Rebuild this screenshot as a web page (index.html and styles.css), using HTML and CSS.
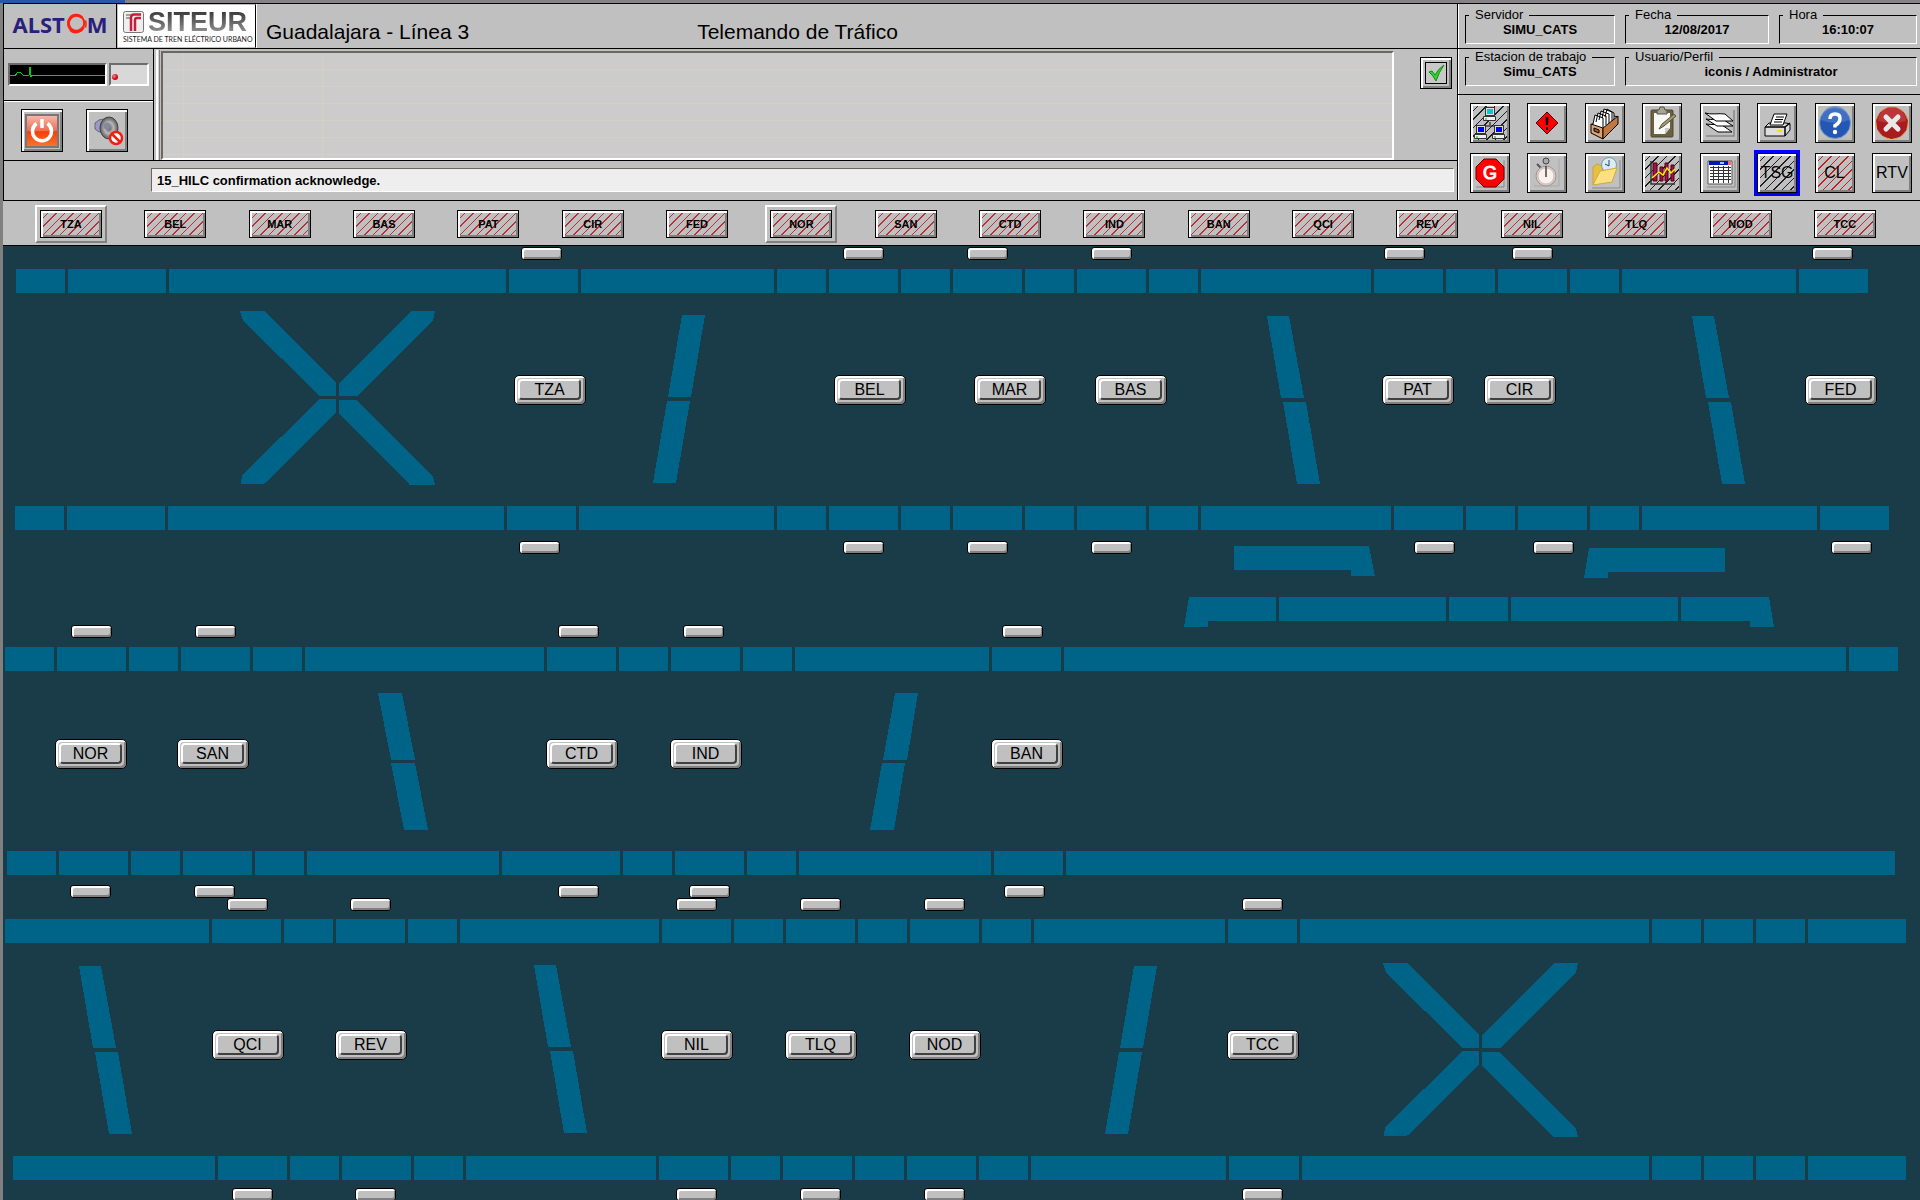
FILE: index.html
```html
<!DOCTYPE html>
<html lang="es">
<head>
<meta charset="utf-8">
<title>Telemando de Tráfico</title>
<link rel="stylesheet" href="styles.css">
</head>
<body>
<div class="topstrip"><div class="topstrip-tab"></div></div>
<div class="app">
  <header class="header">
    <div class="main">
      <div class="brand">
        <div class="alstom">ALST<svg width="22" height="22" viewBox="0 0 22 22" fill="none" stroke="#ff2010"><path stroke-width="3" d="M17 4.500A8 8 0 1 0 18.500 14"/><path stroke-width="2" d="M6 3.500C12-.5 20 4 19 11.500S10 22 5 17"/><path stroke-width="1.500" d="M20.500 7.500q1 3.500 0 7"/></svg>M</div>
        <div class="siteur">
          <div class="siteur-top">
            <svg width="21" height="22" viewBox="0 0 21 22"><rect x=".5" y=".5" width="20" height="21" rx="2" fill="#eee" stroke="#777"/><path d="M3 4h6M3 7h4" stroke="#888" stroke-width="1.500"/><path d="M18 3.500h-7q-3 0-3 3V20M18 7h-4q-2 0-2 2v11" fill="none" stroke="#c2203c" stroke-width="2.500"/></svg>
            <span>SITEUR</span>
          </div>
          <div class="siteur-sub">SISTEMA DE TREN ELÉCTRICO URBANO</div>
        </div>
        <h1 class="titles"><span>Guadalajara - Línea 3</span><span>Telemando de Tráfico</span></h1>
      </div>
      <div class="middle">
        <div class="side">
          <div class="pulse">
            <div class="ecg"><svg width="96" height="19" viewBox="0 0 96 19"><path d="M0 10h3l2 1 3-4 3 1 2 2h6l1-8 1 10 1-2h75" fill="none" stroke="#0c2" shape-rendering="crispEdges"/></svg></div>
            <div class="lamp"><span></span></div>
          </div>
          <div class="side-buttons">
            <button class="sq sq-side" aria-label="Salir"><svg width="34" height="34" viewBox="0 0 34 34"><defs><linearGradient id="pw" x1="0" y1="0" x2="0" y2="1"><stop offset="0" stop-color="#f4bdb0"/><stop offset=".5" stop-color="#ee6a50"/><stop offset=".52" stop-color="#f83c08"/><stop offset="1" stop-color="#f87830"/></linearGradient></defs><rect x="1" y="1" width="32" height="32" fill="url(#pw)" stroke="#777" stroke-width="2"/><path d="M11.500 9.500a9.500 9.500 0 1 0 11 0" fill="none" stroke="#fff" stroke-width="3.500"/><path d="M17 5v9" stroke="#fff" stroke-width="3.500"/></svg></button>
            <button class="sq sq-side" aria-label="Silenciar"><svg width="34" height="34" viewBox="0 0 34 34"><defs><radialGradient id="spk"><stop offset="0" stop-color="#556"/><stop offset=".5" stop-color="#b8b8b8"/><stop offset="1" stop-color="#5a5a5a"/></radialGradient></defs><path d="M5 9l4-3 5-1v12l-5 1-4-3z" fill="#9a9ac8" stroke="#667"/><ellipse cx="19" cy="14" rx="9" ry="11" fill="url(#spk)" stroke="#444"/><circle cx="17" cy="12" r="3.500" fill="#889"/><circle cx="26" cy="24" r="6" fill="#fff" stroke="#f02010" stroke-width="2.500"/><path d="M22 20l8 8" stroke="#f02010" stroke-width="2.500"/></svg></button>
          </div>
        </div>
        <div class="handle"></div>
        <div class="alarms"></div>
        <button class="sq ack" aria-label="Reconocer"><svg width="22" height="22" viewBox="0 0 22 22"><rect x=".5" y=".5" width="21" height="21" fill="#c8c8c8" stroke="#000"/><path d="M4 10l3-1 3 4q3-6 9-10-5 7-8 16-3-6-7-9z" fill="#2bd52b" stroke="#168a16"/></svg></button>
      </div>
      <div class="message"><input type="text" aria-label="Mensaje" value="15_HILC confirmation acknowledge." readonly></div>
    </div>
    <div class="info">
      <div class="boxes boxes-3">
        <fieldset><legend>Servidor</legend><b>SIMU_CATS</b></fieldset>
        <fieldset><legend>Fecha</legend><b>12/08/2017</b></fieldset>
        <fieldset><legend>Hora</legend><b>16:10:07</b></fieldset>
      </div>
      <div class="boxes boxes-2">
        <fieldset><legend>Estacion de trabajo</legend><b>Simu_CATS</b></fieldset>
        <fieldset><legend>Usuario/Perfil</legend><b>iconis / Administrator</b></fieldset>
      </div>
      <div class="tools">
        <button class="sq hatch-black" aria-label="Red"><svg width="34" height="34" viewBox="0 0 34 34"><path d="M17 16v3M7 23v-3h20v3" fill="none" stroke="#000"/><g id="pc"><rect x="12.500" y="1.500" width="9" height="8" fill="#ddd" stroke="#333"/><path d="M10.500 10.500h12v4h-12z" fill="#eee" stroke="#333"/><path d="M12 13h2" stroke="#0a0"/></g><rect x="14" y="3" width="6" height="5" fill="#0cc"/><use href="#pc" x="-9" y="18"/><use href="#pc" x="9" y="18"/><path d="M5 21h6v5H5zM23 21h6v5h-6z" fill="#00f"/></svg></button>
        <button class="sq" aria-label="Alarmas"><svg width="34" height="34" viewBox="0 0 34 34"><path d="M17 6l11 11-11 11L6 17z" fill="#f00" stroke="#400"/><path d="M15.500 11h3l-.5 8h-2zM16 21h2v3h-2z" fill="#000"/></svg></button>
        <button class="sq" aria-label="Archivo"><svg width="34" height="34" viewBox="0 0 34 34" stroke="#000"><path d="M3 19L18 8l12 3-15 13z" fill="#fff"/><path d="M5 18l2-9 8 3v9M8 16l2-9 8 3v9M11 14l2-9 8 3v9M14 12l2-9 8 3v9M17 11l2-8 7 4v8" fill="#fff"/><path d="M3 18l12 4v11L3 27z" fill="#e0a070"/><path d="M15 22l15-12v8L15 33z" fill="#c07840"/><path d="M6 22l5 2v3l-5-2z" fill="#a06030"/></svg></button>
        <button class="sq" aria-label="Informe"><svg width="34" height="34" viewBox="0 0 34 34"><rect x="6" y="4" width="22" height="27" rx="1" fill="#6b6040" stroke="#504830"/><path d="M9 7h16v15l-5 6H9z" fill="#f8f8f4"/><path d="M12 4h2l1-3h4l1 3h2v4H12z" fill="#a8a490" stroke="#555"/><path d="M25 22h-5v6z" fill="#ccc"/><path d="M14 23l3-5L29 8l2 2-12 10z" fill="#a09878" stroke="#5a5238"/></svg></button>
        <button class="sq" aria-label="Capas"><svg width="34" height="34" viewBox="0 0 34 34"><path d="M31 4v26H3" fill="none" stroke="#888" stroke-width="1.500"/><g fill="#fff" stroke="#000"><path d="M3 18c6 1 10 0 16 1l10 7H15z"/><path d="M3 13c6 1 10 0 18 1l9 6H14z"/><path d="M2 7c6 2 14 0 20 1l8 7H13z"/></g></svg></button>
        <button class="sq" aria-label="Imprimir"><svg width="34" height="34" viewBox="0 0 34 34" stroke="#000"><path d="M9 17h17l4 1v6l-5 6H5v-9z" fill="#ddd"/><path d="M10 19l4-11h13l-4 11z" fill="#fff"/><path d="M16 11h8M15 13.500h8M14 16h8" fill="none"/><path d="M5 21h20v9M25 21l5-4" fill="none" stroke-width="1.500"/><path d="M17 24h5v2h-5z" fill="#fd0" stroke="none"/></svg></button>
        <button class="sq" aria-label="Ayuda"><svg width="34" height="34" viewBox="0 0 34 34"><rect x="1" y="1" width="32" height="32" fill="none" stroke="#bdbda0"/><circle cx="17" cy="17" r="15.500" fill="#2456b4" stroke="#7a9ad8"/><path d="M3 14a14 14 0 0 1 28 0q-14 6-28 0z" fill="#5580cc" opacity=".6"/><path d="M12 13q0-5 5-5t5 4.500-5 7v2" fill="none" stroke="#fff" stroke-width="3.500"/><circle cx="17" cy="26" r="2.200" fill="#fff"/></svg></button>
        <button class="sq" aria-label="Cerrar"><svg width="34" height="34" viewBox="0 0 34 34"><circle cx="17" cy="17" r="16" fill="#a81c20" stroke="#e8a030" stroke-dasharray="6 3"/><path d="M3 15a14 14 0 0 1 28 0q-14 4-28 0z" fill="#d86060" opacity=".4"/><path d="M11 11l12 12M23 11L11 23" stroke="#e8e8e8" stroke-width="5" stroke-linecap="round"/></svg></button>
        <button class="sq" aria-label="G"><svg width="34" height="34" viewBox="0 0 34 34"><path d="M31 4v27H3" fill="none" stroke="#888"/><path d="M11 3h12l8 8v12l-8 8H11l-8-8V11z" fill="#f00" stroke="#600"/><text x="17" y="23" text-anchor="middle" class="g-text">G</text></svg></button>
        <button class="sq" aria-label="Cronómetro"><svg width="34" height="34" viewBox="0 0 34 34"><path d="M29 3v27H4" fill="none" stroke="#aaa"/><circle cx="16" cy="5" r="3" fill="#aaa" stroke="#444"/><path d="M7 8l4 4" stroke="#555" stroke-width="2"/><circle cx="16" cy="20" r="10" fill="#d8ccc4" stroke="#999"/><circle cx="16" cy="20" r="8" fill="#fbf0ea" stroke="#dbb"/><path d="M16 10v11" stroke="#444" stroke-width="1.500"/></svg></button>
        <button class="sq" aria-label="Histórico"><svg width="34" height="34" viewBox="0 0 34 34"><path d="M32 4v28H4" fill="none" stroke="#888"/><path d="M5 29V11l4-3 5 2 3 2h9v4" fill="#e8c040" stroke="#c8a040"/><circle cx="21" cy="9" r="7.500" fill="#d8ecf4" stroke="#7a9ab0"/><path d="M21 10V4M21 10l-4-2" stroke="#246"/><path d="M5 29l7-14 17-3-5 14z" fill="#ffe080" stroke="#d0a840"/></svg></button>
        <button class="sq hatch-black" aria-label="Gráfica"><svg width="34" height="34" viewBox="0 0 34 34"><path d="M6 5v23h24" fill="none" stroke="#333" stroke-width="1.500"/><path d="M8 7h4v18H8zM15 11h3v14h-3zM20 7h3v18h-3zM26 9h3v16h-3z" fill="#a01058" stroke="#500"/><path d="M7 22l7-6 4 3 4-7 4 5 4-4" fill="none" stroke="#fe0" stroke-width="1.500"/></svg></button>
        <button class="sq" aria-label="Tabla"><svg width="34" height="34" viewBox="0 0 34 34"><path d="M32 4v27H4" fill="none" stroke="#888"/><path d="M5 5h24v23H5z" fill="#fff" stroke="#555"/><path d="M6 5h22v4H6z" fill="#0018b8"/><path d="M17 6h4v2h-4z" fill="#8cf"/><path d="M25 5h3v4h-3z" fill="#f66"/><path d="M7 11.500h21M7 14.500h21M7 17.500h21M7 20.500h21M7 23.500h21M10.500 10v17M15.500 10v17M20.500 10v17M25.500 10v17" stroke="#333"/></svg></button>
        <button class="sq hatch-black selected">TSG</button>
        <button class="sq hatch-red">CL</button>
        <button class="sq">RTV</button>
      </div>
    </div>
  </header>

  <nav class="stations">
    <button class="st current">TZA</button><button class="st">BEL</button><button class="st">MAR</button><button class="st">BAS</button><button class="st">PAT</button><button class="st">CIR</button><button class="st">FED</button><button class="st current">NOR</button><button class="st">SAN</button><button class="st">CTD</button><button class="st">IND</button><button class="st">BAN</button><button class="st">QCI</button><button class="st">REV</button><button class="st">NIL</button><button class="st">TLQ</button><button class="st">NOD</button><button class="st">TCC</button>
  </nav>

  <main class="map">
    <svg class="tracks" viewBox="3 246 1917 954" preserveAspectRatio="none">
      <defs>
        <g id="cross"><path d="M240 311h24l72 72v13h-16l-77-75zM339 383l72-72h24l-2 9-75 76h-19zM320 399h16v14l-72 71h-23l1-9zM339 400h17l77 77 2 8h-25l-71-72z"/></g>
        <g id="falling"><path d="M1267 316h22l15 82h-23zM1283 402h23l14 82h-23z"/></g>
        <g id="rising"><path d="M682 315h23l-14 82h-23zM667 401h23l-14 82h-23z"/></g>
      </defs>
      <g class="rail">
        <path d="M16 281H65M68 281H166M169 281H506M509 281H578M581 281H774M777 281H826M829 281H898M901 281H950M953 281H1022M1025 281H1074M1077 281H1146M1149 281H1198M1201 281H1371M1374 281H1443M1446 281H1495M1498 281H1567M1570 281H1619M1622 281H1796M1799 281H1868"/>
        <path d="M15 518H64M67 518H165M168 518H504M507 518H576M579 518H774M777 518H826M829 518H898M901 518H950M953 518H1022M1025 518H1074M1077 518H1146M1149 518H1198M1201 518H1391M1394 518H1463M1466 518H1515M1518 518H1587M1590 518H1639M1642 518H1817M1820 518H1889"/>
        <path d="M5 659H54M57 659H126M129 659H178M181 659H250M253 659H302M305 659H544M547 659H616M619 659H668M671 659H740M743 659H792M795 659H989M992 659H1061M1064 659H1846M1849 659H1898"/>
        <path d="M7 863H56M59 863H128M131 863H180M183 863H252M255 863H304M307 863H499M502 863H620M623 863H672M675 863H744M747 863H796M799 863H991M994 863H1063M1066 863H1895"/>
        <path d="M5 931H209M212 931H281M284 931H333M336 931H405M408 931H457M460 931H659M662 931H731M734 931H783M786 931H855M858 931H907M910 931H979M982 931H1031M1034 931H1225M1228 931H1297M1300 931H1649M1652 931H1701M1704 931H1753M1756 931H1805M1808 931H1906"/>
        <path d="M13 1168H215M218 1168H287M290 1168H339M342 1168H411M414 1168H463M466 1168H656M659 1168H728M731 1168H780M783 1168H852M855 1168H904M907 1168H976M979 1168H1028M1031 1168H1226M1229 1168H1299M1302 1168H1649M1652 1168H1701M1704 1168H1753M1756 1168H1805M1808 1168H1906"/>
        <path d="M1279 609H1446M1449 609H1508M1511 609H1678"/>
      </g>
      <g class="shape">
        <path d="M1234 546h135l6 30h-24v-6h-117zM1589 548h136v24h-117v6h-24z"/>
        <path d="M1189 597h87v24h-68v6h-24zM1681 597h88l5 30h-24v-6h-69z"/>
        <use href="#cross"/><use href="#cross" x="1143" y="652"/>
        <use href="#rising"/><use href="#rising" x="452" y="651"/>
        <use href="#falling"/><use href="#falling" x="425"/><use href="#falling" x="-1188" y="650"/><use href="#falling" x="-733" y="649"/>
        <path d="M378 693h24l13 67h-24zM391 763h24l13 67h-24zM895 693h23l-11 67h-24zM882 763h23l-11 67h-24z"/>
      </g>
    </svg>

    <button class="mark" aria-label="TZA vía 1" style="--x:521;--y:247"></button>
    <button class="mark" aria-label="BEL vía 1" style="--x:843;--y:247"></button>
    <button class="mark" aria-label="MAR vía 1" style="--x:967;--y:247"></button>
    <button class="mark" aria-label="BAS vía 1" style="--x:1091;--y:247"></button>
    <button class="mark" aria-label="PAT vía 1" style="--x:1384;--y:247"></button>
    <button class="mark" aria-label="CIR vía 1" style="--x:1512;--y:247"></button>
    <button class="mark" aria-label="FED vía 1" style="--x:1812;--y:247"></button>
    <button class="mark" aria-label="TZA vía 2" style="--x:519;--y:541"></button>
    <button class="mark" aria-label="BEL vía 2" style="--x:843;--y:541"></button>
    <button class="mark" aria-label="MAR vía 2" style="--x:967;--y:541"></button>
    <button class="mark" aria-label="BAS vía 2" style="--x:1091;--y:541"></button>
    <button class="mark" aria-label="PAT vía 2" style="--x:1414;--y:541"></button>
    <button class="mark" aria-label="CIR vía 2" style="--x:1533;--y:541"></button>
    <button class="mark" aria-label="FED vía 2" style="--x:1831;--y:541"></button>
    <button class="mark" aria-label="NOR vía 1" style="--x:71;--y:625"></button>
    <button class="mark" aria-label="SAN vía 1" style="--x:195;--y:625"></button>
    <button class="mark" aria-label="CTD vía 1" style="--x:558;--y:625"></button>
    <button class="mark" aria-label="IND vía 1" style="--x:683;--y:625"></button>
    <button class="mark" aria-label="BAN vía 1" style="--x:1002;--y:625"></button>
    <button class="mark" aria-label="NOR vía 2" style="--x:70;--y:885"></button>
    <button class="mark" aria-label="SAN vía 2" style="--x:194;--y:885"></button>
    <button class="mark" aria-label="CTD vía 2" style="--x:558;--y:885"></button>
    <button class="mark" aria-label="IND vía 2" style="--x:689;--y:885"></button>
    <button class="mark" aria-label="BAN vía 2" style="--x:1004;--y:885"></button>
    <button class="mark" aria-label="QCI vía 1" style="--x:227;--y:898"></button>
    <button class="mark" aria-label="REV vía 1" style="--x:350;--y:898"></button>
    <button class="mark" aria-label="NIL vía 1" style="--x:676;--y:898"></button>
    <button class="mark" aria-label="TLQ vía 1" style="--x:800;--y:898"></button>
    <button class="mark" aria-label="NOD vía 1" style="--x:924;--y:898"></button>
    <button class="mark" aria-label="TCC vía 1" style="--x:1242;--y:898"></button>
    <button class="mark" aria-label="QCI vía 2" style="--x:232;--y:1188"></button>
    <button class="mark" aria-label="REV vía 2" style="--x:355;--y:1188"></button>
    <button class="mark" aria-label="NIL vía 2" style="--x:676;--y:1188"></button>
    <button class="mark" aria-label="TLQ vía 2" style="--x:800;--y:1188"></button>
    <button class="mark" aria-label="NOD vía 2" style="--x:924;--y:1188"></button>
    <button class="mark" aria-label="TCC vía 2" style="--x:1242;--y:1188"></button>

    <button class="station" style="--x:514;--y:375"><span>TZA</span></button>
    <button class="station" style="--x:834;--y:375"><span>BEL</span></button>
    <button class="station" style="--x:974;--y:375"><span>MAR</span></button>
    <button class="station" style="--x:1095;--y:375"><span>BAS</span></button>
    <button class="station" style="--x:1382;--y:375"><span>PAT</span></button>
    <button class="station" style="--x:1484;--y:375"><span>CIR</span></button>
    <button class="station" style="--x:1805;--y:375"><span>FED</span></button>
    <button class="station" style="--x:55;--y:739"><span>NOR</span></button>
    <button class="station" style="--x:177;--y:739"><span>SAN</span></button>
    <button class="station" style="--x:546;--y:739"><span>CTD</span></button>
    <button class="station" style="--x:670;--y:739"><span>IND</span></button>
    <button class="station" style="--x:991;--y:739"><span>BAN</span></button>
    <button class="station" style="--x:212;--y:1030"><span>QCI</span></button>
    <button class="station" style="--x:335;--y:1030"><span>REV</span></button>
    <button class="station" style="--x:661;--y:1030"><span>NIL</span></button>
    <button class="station" style="--x:785;--y:1030"><span>TLQ</span></button>
    <button class="station" style="--x:909;--y:1030"><span>NOD</span></button>
    <button class="station" style="--x:1227;--y:1030"><span>TCC</span></button>
  </main>
</div>
</body>
</html>
```
FILE: styles.css
```css
* { box-sizing: border-box; }

body {
  margin: 0;
  min-height: 100vh;
  display: flex;
  flex-direction: column;
  background: #808080;
  color: #000;
  font-family: "Liberation Sans", Arial, sans-serif;
  font-size: 13px;
}

button { margin: 0; padding: 0; font: inherit; color: inherit; background: #c0c0c0; }
svg { display: block; flex: none; }

.topstrip { height: 3px; background: #848284; }
.topstrip-tab { width: 125px; height: 3px; background: #2858a0; }

.app {
  flex: 1;
  display: flex;
  flex-direction: column;
  border-left: 3px solid #808080;
}

/* header */
.header {
  display: grid;
  grid-template-columns: 1fr 463px;
  background: #c0c0c0;
  border: 1px solid #000;
  border-right: 0;
}
.brand { display: flex; height: 45px; border-bottom: 1px solid #000; }
.alstom {
  display: flex;
  align-items: center;
  justify-content: center;
  width: 113px;
  padding-bottom: 4px;
  border-right: 1px solid #000;
  color: #29207c;
  font: bold 22px "Noto Sans", sans-serif;
}
.siteur {
  width: 139px;
  padding: 5px 5px 0;
  background: #fff;
  border: 1px solid #c0c0c0;
  border-right: 1px solid #000;
}
.siteur-top { display: flex; align-items: center; gap: 4px; height: 24px; }
.siteur-top span {
  font-size: 27px;
  font-weight: bold;
  line-height: 24px;
  background: linear-gradient(#333, #999);
  background-clip: text;
  color: transparent;
}
.siteur-sub { margin-top: 1px; font: 7px/8px Lato, sans-serif; color: #222; white-space: nowrap; }
.titles {
  flex: 1;
  display: flex;
  gap: 228px;
  margin: 0;
  padding: 15px 0 0 9px;
  border-left: 1px solid #fff;
  font-size: 21px;
  font-weight: normal;
  line-height: 26px;
}

.middle { display: flex; align-items: flex-start; height: 112px; border-bottom: 1px solid #000; }
.side { width: 150px; height: 111px; border-right: 1px solid #000; }
.pulse {
  display: flex;
  align-items: center;
  gap: 2px;
  height: 53px;
  padding: 0 0 2px 4px;
  border-bottom: 1px solid #fff;
  box-shadow: inset 0 -1px #000;
}
.ecg, .lamp {
  height: 23px;
  border: 2px solid;
  border-color: #6c6c6c #fff #fff #6c6c6c;
}
.ecg { width: 99px; background: #000; overflow: hidden; }
.lamp { width: 40px; padding: 9px 0 0 1px; background: #d8d8d8; }
.lamp span { display: block; width: 6px; height: 6px; border-radius: 50%; background: radial-gradient(circle at 35% 35%, #f88, #d01020 50%, #900); }
.side-buttons { display: flex; gap: 23px; padding: 7px 0 0 17px; }
.handle {
  align-self: stretch;
  width: 4px;
  margin: 1px 1px 0 2px;
  border-left: 2px solid #fff;
  border-right: 1px solid #808080;
  background: #d4d0c8;
}
.alarms {
  flex: 1;
  height: 109px;
  margin: 2px 26px 0 0;
  border: 2px solid;
  border-color: #6c6860 #fff #fff #6c6860;
  background:
    linear-gradient(90deg, transparent 20px, #d4d0c4 20px 21px, transparent 21px 159px, #d4d0c4 159px 160px, transparent 160px),
    repeating-linear-gradient(#cccccc 0 16px, #d4d0c4 16px 17px);
}

/* raised square buttons */
.sq {
  display: flex;
  align-items: center;
  justify-content: center;
  width: 40px;
  height: 40px;
  border: 1px solid #000;
  box-shadow: inset 2px 2px #fff, inset -2px -2px #808080;
  font-size: 16px;
}
.sq-side { width: 42px; height: 43px; }
.ack { width: 32px; height: 32px; margin: 8px 5px 0 0; }
.hatch-black { background: repeating-linear-gradient(135deg, #202020 0 1px, #c0c0c0 1px 6px); }
.hatch-red { background: repeating-linear-gradient(135deg, #c02020 0 1px, #c0c0c0 1px 6px); }
.selected { outline: 3px solid #0000ff; }
.g-text { font: 18px "Liberation Sans", sans-serif; fill: #fff; stroke: #fff; }

.message { height: 39px; padding: 7px 3px 0 147px; }
.message input {
  display: block;
  width: 100%;
  height: 24px;
  padding: 0 5px;
  border: 1px solid;
  border-color: #6c6860 #fff #fff #6c6860;
  background: #eeeeee;
  font: bold 13px "Liberation Sans", Arial, sans-serif;
}

/* session details and tools */
.info { border-left: 1px solid #000; box-shadow: inset 1px 0 #fff; }
.boxes {
  display: grid;
  gap: 10px;
  padding: 3px 3px 0 7px;
  border-bottom: 1px solid #000;
}
.boxes-3 { grid-template-columns: 150fr 144fr 138fr; height: 45px; }
.boxes-2 { grid-template-columns: 150fr 292fr; height: 46px; padding-top: 0; }
.boxes fieldset {
  min-width: 0;
  height: 37px;
  margin: 0;
  padding: 0;
  border: 1px solid;
  border-color: #000 #fff #fff #000;
  text-align: center;
}
.boxes legend { margin-left: 3px; padding: 0 6px; line-height: 16px; text-align: left; }
.boxes b { display: block; line-height: 14px; }
.tools {
  display: grid;
  grid-template-columns: repeat(8, 40px);
  justify-content: space-between;
  gap: 10px 0;
  padding: 8px 8px 6px 12px;
}

/* station bar */
.stations {
  display: flex;
  align-items: center;
  justify-content: space-between;
  height: 45px;
  padding: 1px 44px 0 37px;
  background: #c0c0c0;
  border-bottom: 1px solid #000;
}
.st {
  position: relative;
  width: 62px;
  height: 28px;
  border: 1px solid #000;
  box-shadow: inset 2px 2px #fff, inset -2px -2px #808080;
  background: repeating-linear-gradient(135deg, #b83038 0 1px, #c0c0c0 1px 6px);
  font-size: 11px;
  font-weight: bold;
}
.current::after {
  content: "";
  position: absolute;
  inset: -6px;
  border: 2px solid;
  border-color: #fff #808080 #808080 #fff;
}

/* track diagram */
.map {
  position: relative;
  flex: 1;
  min-height: 700px;
  overflow: hidden;
  background: #1a3c48;
}
.tracks { position: absolute; inset: 0; width: 100%; height: 100%; shape-rendering: crispEdges; }
.rail { fill: none; stroke: #006388; stroke-width: 24; }
.shape { fill: #006388; }
.mark, .station {
  position: absolute;
  left: calc((var(--x) - 3) / 1917 * 100%);
  top: calc((var(--y) - 246) / 954 * 100%);
  border: 1px solid #000;
}
.mark {
  width: 41px;
  height: 13px;
  border-radius: 3px;
  box-shadow: inset 2px 2px #fff, inset -1px -2px #808080;
}
.station {
  width: 72px;
  height: 30px;
  padding: 3px 4px 4px 3px;
  border-radius: 5px;
  box-shadow: inset 2px 2px #fff, inset -2px -2px #808080;
  font-size: 16px;
}
.station span {
  display: block;
  height: 21px;
  border: 2px solid;
  border-color: #fff #404040 #404040 #fff;
  border-radius: 4px;
  line-height: 17px;
}
```
